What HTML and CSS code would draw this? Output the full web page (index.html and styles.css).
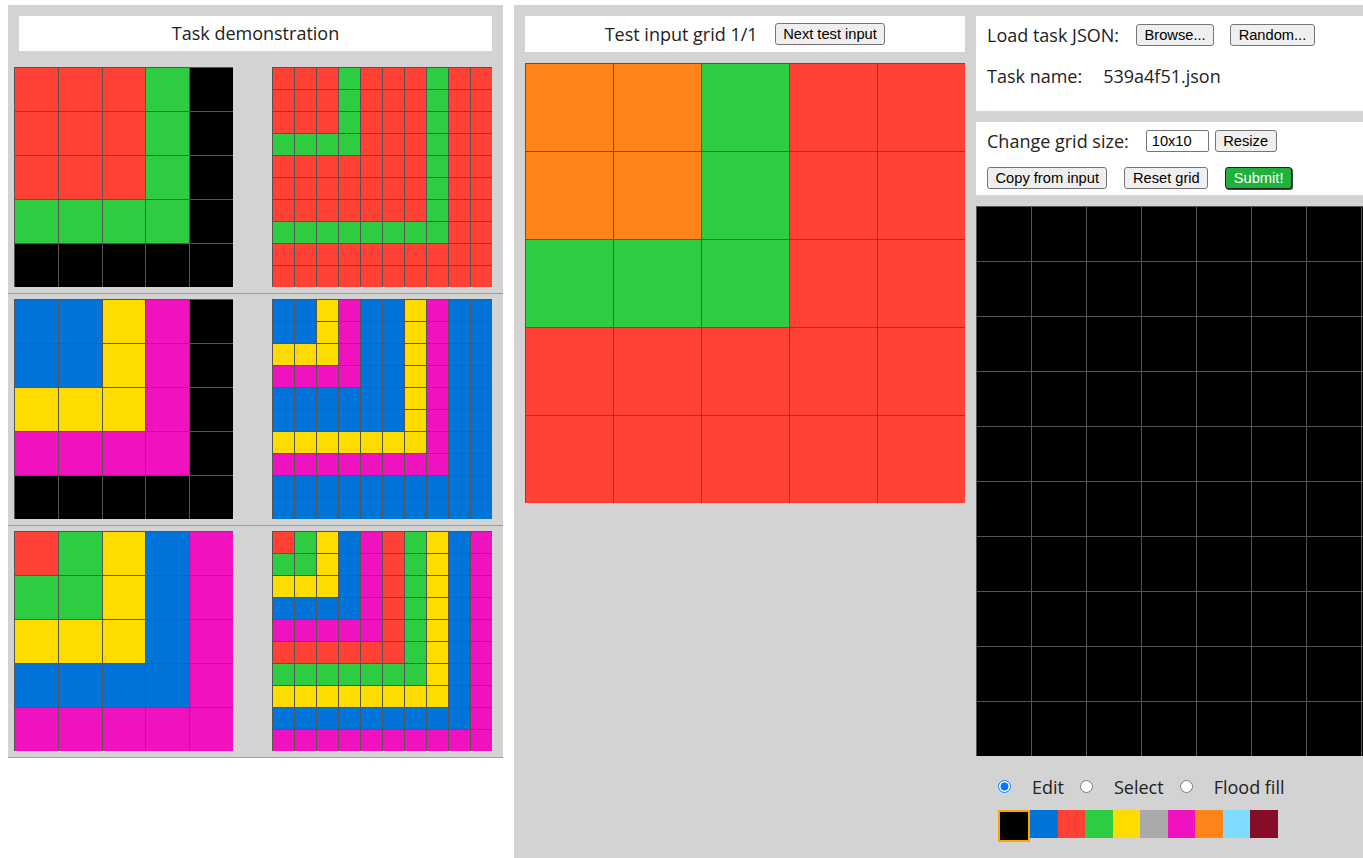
FILE: index.html
```html
<!DOCTYPE html>
<html lang="en">
<head>
<meta charset="utf-8">
<title>ARC testing interface</title>
<link rel="stylesheet" href="styles.css">
</head>
<body>
<div class="workspace">
  <section class="demo-panel">
    <div class="title-box demo-title">Task demonstration</div>
    <div class="pair">
      <div class="grid g5 pin" data-cells="22230 22230 22230 33330 00000"></div>
      <div class="grid g10 pout" data-cells="2223222322 2223222322 2223222322 3333222322 2222222322 2222222322 2222222322 3333333322 2222222222 2222222222"></div>
    </div>
    <div class="pair">
      <div class="grid g5 pin" data-cells="11460 11460 44460 66660 00000"></div>
      <div class="grid g10 pout" data-cells="1146114611 1146114611 4446114611 6666114611 1111114611 1111114611 4444444611 6666666611 1111111111 1111111111"></div>
    </div>
    <div class="pair">
      <div class="grid g5 pin" data-cells="23416 33416 44416 11116 66666"></div>
      <div class="grid g10 pout" data-cells="2341623416 3341623416 4441623416 1111623416 6666623416 2222223416 3333333416 4444444416 1111111116 6666666666"></div>
    </div>
  </section>

  <section class="main-panel">
    <div class="test-col">
      <div class="title-box test-title">
        <span>Test input grid 1/1</span>
        <button type="button">Next test input</button>
      </div>
      <div class="grid g5 big" data-cells="77322 77322 33322 22222 22222"></div>
    </div>

    <div class="ctrl-col">
      <div class="card load-card">
        <div class="row">
          <span class="lbl">Load task JSON:</span>
          <button type="button" class="b-browse">Browse...</button>
          <button type="button" class="b-random">Random...</button>
        </div>
        <div class="row">
          <span class="lbl">Task name:</span>
          <span class="task-name">539a4f51.json</span>
        </div>
      </div>

      <div class="card edit-card">
        <div class="row">
          <span class="lbl">Change grid size:</span>
          <input class="size-input" type="text" value="10x10">
          <button type="button" class="b-resize">Resize</button>
        </div>
        <div class="row">
          <button type="button">Copy from input</button>
          <button type="button" class="b-gap">Reset grid</button>
          <button type="button" class="b-gap submit">Submit!</button>
        </div>
      </div>

      <div class="grid g10 outgrid" data-cells="0000000000 0000000000 0000000000 0000000000 0000000000 0000000000 0000000000 0000000000 0000000000 0000000000"></div>

      <div class="tools">
        <input type="radio" name="tool" id="t-edit" checked>
        <label for="t-edit">Edit</label>
        <input type="radio" name="tool" id="t-select">
        <label for="t-select">Select</label>
        <input type="radio" name="tool" id="t-fill">
        <label for="t-fill">Flood fill</label>
      </div>

      <div class="palette">
        <div class="swatch c0 selected"></div>
        <div class="swatch c1"></div>
        <div class="swatch c2"></div>
        <div class="swatch c3"></div>
        <div class="swatch c4"></div>
        <div class="swatch c5"></div>
        <div class="swatch c6"></div>
        <div class="swatch c7"></div>
        <div class="swatch c8"></div>
        <div class="swatch c9"></div>
      </div>
    </div>
  </section>
</div>
<script src="script.js"></script>
</body>
</html>
```

FILE: styles.css
```css
* { box-sizing: border-box; }

html, body { margin: 0; padding: 0; }

body {
  margin: 5px 0 0 8px;
  font-family: "Open Sans", "DejaVu Sans", sans-serif;
  font-size: 18px;
  color: #222;
  background: #fff;
}

.workspace {
  display: flex;
  align-items: flex-start;
  gap: 11px;
}

/* ---------- demonstration panel ---------- */
.demo-panel {
  flex: 0 0 495px;
  background: #d3d3d3;
  padding-top: 11px;
}

.title-box {
  background: #fff;
  display: flex;
  align-items: center;
  justify-content: center;
}

.demo-title {
  height: 35px;
  padding-bottom: 2px;
  margin: 0 11px 11px;
}

.pair {
  display: flex;
  justify-content: space-between;
  padding: 5px 11px 6px 6px;
  border-bottom: 1px solid #9c9c9c;
}

/* ---------- grids ---------- */
.grid { display: grid; }
.g5 { grid-template-columns: repeat(5, 1fr); grid-template-rows: repeat(5, 1fr); }
.g10 { grid-template-columns: repeat(10, 1fr); grid-template-rows: repeat(10, 1fr); }

.pin { width: 219px; height: 220px; }
.pout { width: 220px; height: 220px; }
.big { width: 440px; height: 440px; }
.outgrid { width: 550px; height: 550px; margin-top: 11px; }

.cell {
  border-top: 1px solid #555;
  border-left: 1px solid #555;
}

.c0 { background: #000000; }
.c1 { background: #0074D9; }
.c2 { background: #FF4136; }
.c3 { background: #2ECC40; }
.c4 { background: #FFDC00; }
.c5 { background: #AAAAAA; }
.c6 { background: #F012BE; }
.c7 { background: #FF851B; }
.c8 { background: #7FDBFF; }
.c9 { background: #870C25; }

/* ---------- main panel ---------- */
.main-panel {
  flex: 1 1 0;
  min-width: 0;
  height: calc(100vh - 5px);
  overflow: hidden;
  background: #d3d3d3;
  padding: 11px;
  display: flex;
  align-items: flex-start;
  gap: 11px;
}

.test-col { flex: 0 0 440px; }

.test-title {
  height: 36px;
  padding-bottom: 1px;
  gap: 17px;
  margin-bottom: 11px;
}

.ctrl-col { flex: 0 0 550px; }

.card {
  background: #fff;
  padding: 8px 11px 6px;
  display: flex;
  flex-direction: column;
}

.load-card { padding-bottom: 24px; gap: 19px; }
.edit-card { margin-top: 11px; gap: 15px; }

.row {
  display: flex;
  align-items: center;
  height: 22px;
}

.b-browse { margin-left: 17px; }
.b-random { margin-left: 16px; }
.task-name { margin-left: 21px; }
.size-input { margin-left: 17px; }
.b-resize { margin-left: 6px; }
.b-gap { margin-left: 17px; }

/* ---------- form controls ---------- */
button, .size-input {
  font-family: "Liberation Sans", Arial, sans-serif;
  font-size: 14.67px;
  color: #000;
  height: 22px;
}

button {
  padding: 0 7.5px;
  background: #efefef;
  border: 1px solid #767676;
  border-radius: 3px;
}

.submit {
  background: #1fb13b;
  color: #fff;
  border: 1px solid #222;
  box-shadow: 1px 1px 0 #444;
}

.size-input {
  width: 63px;
  padding: 0 5px;
  border: 1px solid #767676;
  border-radius: 2px;
  background: #fff;
}

/* ---------- tools ---------- */
.tools {
  display: flex;
  align-items: center;
  height: 13px;
  margin-top: 24px;
  padding-left: 22px;
}

.tools input {
  width: 13px;
  height: 13px;
  margin: 0 21px 0 0;
}

.tools label { margin-right: 16px; }

.palette {
  display: flex;
  align-items: flex-start;
  margin-top: 17px;
  padding-left: 22px;
}

.swatch {
  width: 27.5px;
  height: 28px;
}

.swatch.selected {
  width: 32px;
  height: 32px;
  border: 2px solid #FFA500;
}
```

FILE: script.js
```js
document.querySelectorAll('.grid[data-cells]').forEach(function (grid) {
  var rows = grid.getAttribute('data-cells').split(' ');
  rows.forEach(function (row) {
    for (var i = 0; i < row.length; i++) {
      var cell = document.createElement('div');
      cell.className = 'cell c' + row[i];
      grid.appendChild(cell);
    }
  });
});
```
